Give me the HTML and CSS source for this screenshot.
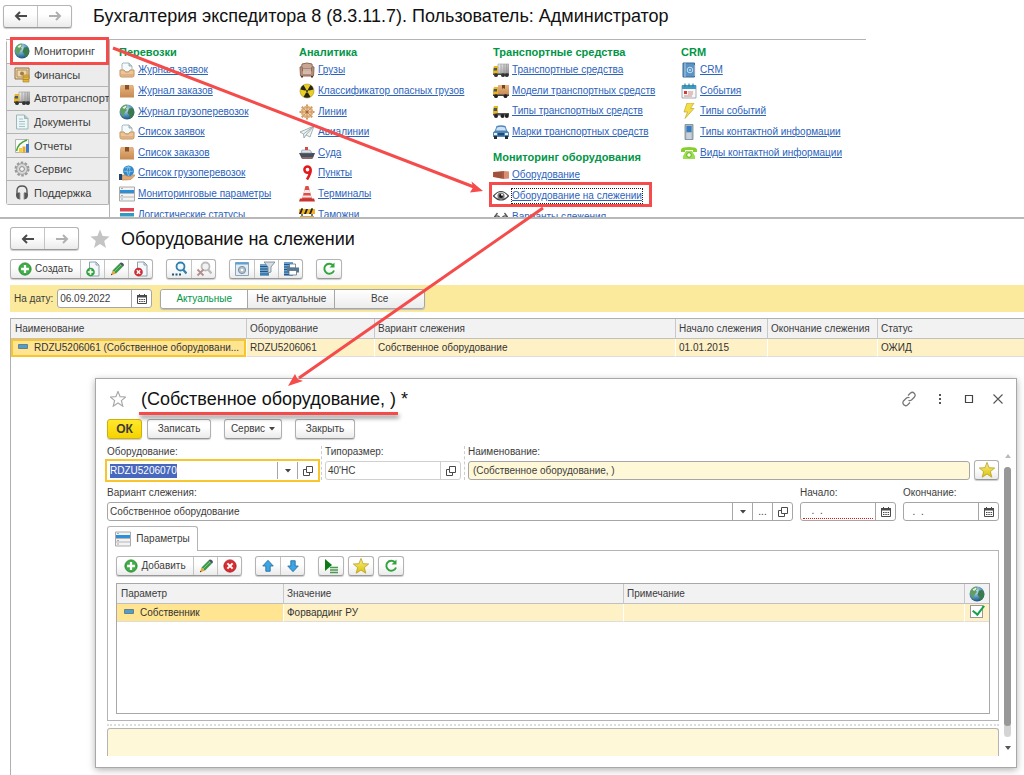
FILE: index.html
```html
<!DOCTYPE html>
<html lang="ru">
<head>
<meta charset="utf-8">
<title>Бухгалтерия экспедитора 8</title>
<link rel="stylesheet" href="styles.css">
</head>
<body>
<svg class="sprite" aria-hidden="true">
  <defs>
    <linearGradient id="g-box" x1="0" y1="0" x2="0" y2="1"><stop offset="0" stop-color="#e8b681"/><stop offset="1" stop-color="#c68a50"/></linearGradient>
    <radialGradient id="g-globe" cx=".4" cy=".3" r=".8"><stop offset="0" stop-color="#d8ecf7"/><stop offset=".5" stop-color="#5a98bd"/><stop offset="1" stop-color="#0e3c6b"/></radialGradient>
    <linearGradient id="g-star" x1="0" y1="0" x2="0" y2="1"><stop offset="0" stop-color="#f7ee8c"/><stop offset="1" stop-color="#ddc200"/></linearGradient>
    <linearGradient id="g-steel" x1="0" y1="0" x2="1" y2="1"><stop offset="0" stop-color="#f4f4f4"/><stop offset="1" stop-color="#8a8a8a"/></linearGradient>
  </defs>
  <symbol id="i-back" viewBox="0 0 16 16"><path d="M14 8H3M7 4L3 8l4 4" fill="none" stroke="currentColor" stroke-width="2"/></symbol>
  <symbol id="i-fwd" viewBox="0 0 16 16"><path d="M2 8h11M9 4l4 4-4 4" fill="none" stroke="currentColor" stroke-width="2"/></symbol>
  <symbol id="i-tray" viewBox="0 0 16 16"><path d="M3 2l1-1h6l3 3v6H3z" fill="#f5fafa" stroke="#8fa5ab" stroke-width=".8"/><path d="M10 1v3h3" fill="#bfd6dc" stroke="#8fa5ab" stroke-width=".8"/><path d="M1 8h4l1.500 2h3L11 8h4v5.500q0 1.500-1.500 1.500h-11Q1 15 1 13.500z" fill="#ecc598" stroke="#c4935f"/><path d="M1.500 13h13" stroke="#d3a06a"/></symbol>
  <symbol id="i-box" viewBox="0 0 16 16"><path d="M2 2h12l1 3v9.500H1V5z" fill="url(#g-box)"/><path d="M2 2h12l1 3H1z" fill="#e2b080"/><path d="M6 2h4v5l-1.300-1L8 7.300 7.200 6 6 7z" fill="#8a5029"/></symbol>
  <symbol id="i-globe" viewBox="0 0 16 16"><circle cx="8" cy="8" r="7.500" fill="url(#g-globe)"/><path d="M1.500 4.500Q4 .8 7.500 .6L8.500 3 7 4.500 8 6 6.500 7.500 5 10l-.5 3L2.500 10 .8 7.500z" fill="#5f9f63"/><path d="M10 4.500L13 4l1.800 2 .4 3-1.700 4-2 1.500L10.500 11 8.500 9z" fill="#3b7a4a"/><path d="M3.500 3.500L7 1.500 7.500 3 5 5z" fill="#e8f3e4"/></symbol>
  <symbol id="i-handglobe" viewBox="0 0 16 16"><circle cx="9.500" cy="6" r="5.500" fill="#3289c7"/><path d="M6 3q3-2 6 0M4.500 6q5 2 10 0M9.500 .5q-3 5 0 11M9.500 .5q3 5 0 11" fill="none" stroke="#8cc5ec" stroke-width=".8"/><path d="M3 10h3l3 1.500h3l3-2q1 0 .5 1.500L12 14.500 7 15H3z" fill="#e3a873" stroke="#a9703e" stroke-width=".5"/><path d="M0 9h3v6H0z" fill="#24466b"/></symbol>
  <symbol id="i-list" viewBox="0 0 16 16"><path d="M.5 1h15v14H.5z" fill="#f3f3f3" stroke="#aaa"/><path d="M1 4h14v3H1z" fill="#2e8fd6"/><path d="M1 7.500h14M1 11h14" stroke="#b5b5b5"/><path d="M2 2.500h2M2 9.500h2M2 13h2" stroke="#aaa"/></symbol>
  <symbol id="i-bars" viewBox="0 0 16 16"><path d="M1 1h14v3.500H1z" fill="#df4350"/><path d="M1 6h14v3.500H1z" fill="#319ac2"/><path d="M1 11h14v4H1z" fill="#6eb84c"/></symbol>
  <symbol id="i-sofa" viewBox="0 0 16 16"><path d="M3 2q5-2 10 0l.5 5h-11z" fill="#c9a592" stroke="#8d6b5a"/><path d="M1 5q2-1 2.500 1v3h9V6q.5-2 2.500-1l-.5 9h-13z" fill="#b58c78" stroke="#8d6b5a"/><path d="M4 9h8v3H4z" fill="#d7baa9"/><path d="M2 14h2v1.500H2zM12 14h2v1.500h-2z" fill="#543525"/></symbol>
  <symbol id="i-rad" viewBox="0 0 16 16"><circle cx="8" cy="8" r="7" fill="#e8cf22" stroke="#a0942c" stroke-width=".6"/><path d="M8 8L1.500 6.500Q2 3 4.500 2zM8 8l3.500-6Q14 3 14.500 6.500zM8 8l3.500 6Q8 15.500 4.500 14z" fill="#26261a"/><circle cx="8" cy="8" r="1.600" fill="#e8cf22"/><circle cx="8" cy="8" r="1" fill="#26261a"/></symbol>
  <symbol id="i-wheel" viewBox="0 0 16 16"><path d="M8 .5v15M.5 8h15M2.800 2.800l10.400 10.400M13.200 2.800L2.800 13.200" stroke="#cc9562" stroke-width="2"/><circle cx="8" cy="8" r="5" fill="#f0cfa8" stroke="#dfae76" stroke-width="2.400"/><path d="M8 3v10M3 8h10M4.500 4.500l7 7M11.500 4.500l-7 7" stroke="#c08450" stroke-width=".8"/><circle cx="8" cy="8" r="1.500" fill="#a4683a"/></symbol>
  <symbol id="i-plane" viewBox="0 0 16 16"><path d="M1 8l14-6-4 11-4-2-2 3-.5-4z" fill="#eef4f4" stroke="#8ca0a2" stroke-width=".8"/><path d="M15 2L4.500 10M15 2L7 11" stroke="#8ca0a2" stroke-width=".8"/></symbol>
  <symbol id="i-ship" viewBox="0 0 16 16"><path d="M0 8h16l-2 5H2.500z" fill="#46505d"/><path d="M2 12h12l-.5 2H3z" fill="#8d6a6a"/><path d="M3 5h8l2 3H2z" fill="#dde3e8" stroke="#7f8b98" stroke-width=".6"/><path d="M6 2h3v3H6z" fill="#d14c3e"/></symbol>
  <symbol id="i-pin" viewBox="0 0 16 16"><path d="M8.500 1.500a3 3 0 1 1 0 6.200a3 3 0 1 1 0-6.200M11.700 4.500Q12 8 8 14.500" fill="none" stroke="#e3191b" stroke-width="2.500"/></symbol>
  <symbol id="i-cone" viewBox="0 0 16 16"><path d="M6.500 0h3L13 13H3z" fill="#e34c42"/><path d="M5.500 4h5l.8 3H4.700zM4 9.500h8l.5 2h-9z" fill="#f4e9e7"/><path d="M1 12.500h14l1 3H0z" fill="#c8342f"/></symbol>
  <symbol id="i-barrier" viewBox="0 0 16 16"><path d="M2 1h2v14H2zM12 1h2v14h-2z" fill="#777"/><path d="M0 2h16v5H0z" fill="#f0b222"/><path d="M2 2h2L2 7H0zM7 2h2L7 7H5zM12 2h2l-2 5h-2z" fill="#27231b"/><path d="M1 9h14v3H1z" fill="#dba633"/></symbol>
  <symbol id="i-truck" viewBox="0 0 16 16"><path d="M5 2h11v10H5z" fill="url(#g-steel)" stroke="#999" stroke-width=".6"/><path d="M8 2v10M11 2v10M13.500 2v10" stroke="#999" stroke-width=".7"/><path d="M1 4h4v8.500H0V7z" fill="#e9b425"/><path d="M1 6h3v2.500H.5z" fill="#445866"/><path d="M0 11.500h16v1.500H0z" fill="#4e4e4e"/><circle cx="3" cy="13.200" r="1.900" fill="#333"/><circle cx="10" cy="13.200" r="1.900" fill="#333"/><circle cx="13.800" cy="13.200" r="1.900" fill="#333"/></symbol>
  <symbol id="i-truckbox" viewBox="0 0 16 16"><path d="M5 2h11v10H5z" fill="url(#g-box)"/><path d="M9 2h3v4L10.500 5 9 6z" fill="#7b431c"/><path d="M1 4h4v8.500H0V7z" fill="#e9b425"/><path d="M1 6h3v2.500H.5z" fill="#445866"/><path d="M0 11.500h16v1.500H0z" fill="#3e3e3e"/><circle cx="3" cy="13.200" r="1.900" fill="#222"/><circle cx="12.500" cy="13.200" r="1.900" fill="#222"/></symbol>
  <symbol id="i-chassis" viewBox="0 0 16 16"><path d="M1 3h4v9H0V6z" fill="#e9b425"/><path d="M1 5h3v3H.5z" fill="#445866"/><path d="M5 10h11v2.500H0V11z" fill="#555"/><circle cx="3" cy="13" r="2" fill="#222"/><circle cx="9.500" cy="13" r="2" fill="#222"/><circle cx="13.800" cy="13" r="2" fill="#222"/></symbol>
  <symbol id="i-car" viewBox="0 0 16 16"><path d="M3.500 2q4.500-1.500 9 0L14 6.500l2 2V13H0V8.500l2-2z" fill="#4c86bd"/><path d="M4 3.500q4-1.300 8 0l1 3H3z" fill="#cfe2ef"/><path d="M1 9h3v2H1zM12 9h3v2h-3z" fill="#f2f0da"/><path d="M5 9h6v2.500H5z" fill="#234b75"/><path d="M1 12h3v3H1zM12 12h3v3h-3z" fill="#252c35"/></symbol>
  <symbol id="i-cont" viewBox="0 0 16 16"><path d="M0 5l11-1v8L0 10z" fill="#ab5a42"/><path d="M11 4l5 .5v7l-5 .5z" fill="#d88f73"/><path d="M2 5v5M4 5v5.500M6 5v6M8 4.500v7" stroke="#8b4531" stroke-width=".7"/></symbol>
  <symbol id="i-eye" viewBox="0 0 16 16"><path d="M.5 8q7.500-9 15 0q-7.500 8-15 0z" fill="#fff" stroke="#444" stroke-width="1.200"/><circle cx="8" cy="8" r="3.600" fill="#777"/><circle cx="8" cy="8" r="1.900" fill="#111"/><circle cx="9" cy="6.800" r="1" fill="#fff"/></symbol>
  <symbol id="i-glasses" viewBox="0 0 16 16"><circle cx="4" cy="9.500" r="2.700" fill="#eee" stroke="#555" stroke-width="1.300"/><circle cx="12" cy="9.500" r="2.700" fill="#eee" stroke="#555" stroke-width="1.300"/><path d="M6.500 9h3M1.500 8l3-4M14.500 8l-3-4" fill="none" stroke="#555" stroke-width="1.300"/></symbol>
  <symbol id="i-book" viewBox="0 0 16 16"><path d="M2 1h11.500v14H2z" fill="#5a93c4" stroke="#3a6a95"/><path d="M4 1v14" stroke="#a8cae4"/><circle cx="9" cy="8" r="2.800" fill="none" stroke="#c5dff0"/><circle cx="9" cy="8" r="1" fill="#c5dff0"/><path d="M14 3v11" stroke="#e8e8e8"/></symbol>
  <symbol id="i-event" viewBox="0 0 16 16"><path d="M1 2.500h14V15H1z" fill="#f7f7f7" stroke="#8e9aa2" stroke-width=".8"/><path d="M1 2h14v4H1z" fill="#3c9cc6"/><path d="M4 .5v3M8 .5v3M12 .5v3" stroke="#236b8c"/><path d="M3 8h3v3H3z" fill="#d63b3b"/><path d="M7 9h5M7 11h5M3 13h8" stroke="#d08b8b"/></symbol>
  <symbol id="i-bolt" viewBox="0 0 16 16"><path d="M6 0h7L9.500 5.500H13L4 15.500 6.500 9H3z" fill="#f3dd4a" stroke="#c1a72c" stroke-width=".7"/></symbol>
  <symbol id="i-mobile" viewBox="0 0 16 16"><path d="M4 .5h8v15H4z" fill="#a9b6c2" stroke="#78858f" stroke-width=".8"/><path d="M5.500 2h5v6h-5z" fill="#347dc0"/><path d="M5.500 10h5M5.500 12h5M5.500 14h5" stroke="#e9edf0"/></symbol>
  <symbol id="i-phone" viewBox="0 0 16 16"><path d="M0 5q0-2 3-2.500q5-1 10 0Q16 3 16 5v2h-4V5H4v2H0z" fill="#86cf2f"/><path d="M5 6h6l3 5v3H2v-3z" fill="#9be04a"/><circle cx="8" cy="10" r="2.300" fill="#fff" stroke="#5fae1c"/></symbol>
  <symbol id="i-money" viewBox="0 0 16 16"><path d="M1 1h14v11H1z" fill="#ecd9ab" stroke="#94714a"/><path d="M3 3h10v7H3z" fill="none" stroke="#b28f62"/><circle cx="8" cy="6.500" r="2" fill="#a57b4e"/><path d="M9 8h6v7H9z" fill="#e2b63c" stroke="#a98024" stroke-width=".6"/><path d="M9 10h6M9 12.500h6" stroke="#a98024" stroke-width=".7"/></symbol>
  <symbol id="i-doc" viewBox="0 0 16 16"><path d="M2.500 1h8l3.500 3.500V15H2.500z" fill="#edf6f7" stroke="#9db6ba"/><path d="M10.500 1v3.500H14" fill="#aac8cd" stroke="#9db6ba"/><path d="M5 5h4M5 7.500h6M5 10h6M5 12.500h6" stroke="#a5c3c8"/></symbol>
  <symbol id="i-chart" viewBox="0 0 16 16"><path d="M1.500 1.500h13v13h-13z" fill="#fafafa" stroke="#b4b4b4"/><path d="M2.500 13Q4 5 13 2" fill="none" stroke="#49a337" stroke-width="1.500"/><path d="M5 10h3v4.500H5z" fill="#f2d03a"/><path d="M8.500 8.500h3v6h-3z" fill="#e9a92a"/><path d="M12 6h3v8.500h-3z" fill="#3f7bc8"/></symbol>
  <symbol id="i-gear" viewBox="0 0 16 16"><circle cx="8" cy="8" r="6.300" fill="none" stroke="#999" stroke-width="2.400" stroke-dasharray="2.500 1.450"/><circle cx="8" cy="8" r="5.400" fill="#d8d8d8" stroke="#a2a2a2"/><circle cx="8" cy="8" r="2.400" fill="#f4f4f4" stroke="#888"/></symbol>
  <symbol id="i-head" viewBox="0 0 16 16"><path d="M3 10V6q0-5 5-5t5 5v4" fill="none" stroke="#555" stroke-width="1.400"/><path d="M2 10q0-3 4-2.500v7Q2 14 2 10zM14 10q0-3-4-2.500v7q4-.5 4-4.500z" fill="#555"/><path d="M6.300 8v6.500M9.700 8v6.500" stroke="#c4c4c4" stroke-width="1.200"/></symbol>
  <symbol id="i-plus" viewBox="0 0 16 16"><circle cx="8" cy="8" r="7" fill="#3ead44" stroke="#24862c"/><path d="M8 3.500v9M3.500 8h9" stroke="#fff" stroke-width="2.600"/></symbol>
  <symbol id="i-newdoc" viewBox="0 0 16 16"><path d="M4.500 1H11l3 3v11H4.500z" fill="#f4f8fa" stroke="#8ea2ae"/><path d="M11 1v3h3" fill="none" stroke="#8ea2ae"/><circle cx="5.500" cy="11" r="4.300" fill="#2f9f3c"/><path d="M5.500 8.300v5.400M2.800 11h5.400" stroke="#fff" stroke-width="1.700"/></symbol>
  <symbol id="i-deldoc" viewBox="0 0 16 16"><path d="M4.500 1H11l3 3v11H4.500z" fill="#f4f8fa" stroke="#8ea2ae"/><path d="M11 1v3h3" fill="none" stroke="#8ea2ae"/><circle cx="5.500" cy="11" r="4.300" fill="#cf2c35"/><path d="M3.800 9.300l3.400 3.400M7.200 9.300l-3.400 3.400" stroke="#fff" stroke-width="1.500"/></symbol>
  <symbol id="i-pencil" viewBox="0 0 16 16"><path d="M3.500 9.500l7-7 3.300 3.300-7 7z" fill="#3d9b47"/><path d="M5 11l7-7" stroke="#7cc67d"/><path d="M10.500 2.500q1.500-2 3.500-.2t-.2 3.500z" fill="#4b5664"/><path d="M3.500 9.500L2 14.300l4.800-1.500z" fill="#e7a33c"/><path d="M2.400 12.800L2 14.300l1.500-.5z" fill="#222"/></symbol>
  <symbol id="i-search" viewBox="0 0 16 16"><circle cx="9.500" cy="5.500" r="4" fill="#eef7fb" stroke="#337fae" stroke-width="1.800"/><path d="M12 8.500l3.500 4" stroke="#337fae" stroke-width="2.300"/><path d="M1 13.500h2M4.500 13.500h2M8 13.500h2" stroke="#1d587e" stroke-width="2"/></symbol>
  <symbol id="i-searchx" viewBox="0 0 16 16"><circle cx="9.500" cy="5.500" r="4" fill="#f2f2f2" stroke="#bbb" stroke-width="1.800"/><path d="M12 8.500l3.500 4" stroke="#bbb" stroke-width="2.300"/><path d="M1.500 8.500l6 6M7.500 8.500l-6 6" stroke="#b58f8f" stroke-width="1.800"/></symbol>
  <symbol id="i-setup" viewBox="0 0 16 16"><path d="M1.500 1.500h13v13h-13z" fill="#e4edf3" stroke="#8aa6ba"/><path d="M1.500 2.500h13" stroke="#5ba3d6" stroke-width="2"/><circle cx="8" cy="9" r="3.600" fill="#b4c2cc" stroke="#7b8f9c"/><circle cx="8" cy="9" r="1.300" fill="#fff"/></symbol>
  <symbol id="i-filter" viewBox="0 0 16 16"><path d="M1 3h9v12H1z" fill="#6fa3cd"/><path d="M1 5.500h9M1 8h9M1 10.500h9M1 13h9" stroke="#1f5788"/><path d="M5 1h11l-4 5v5l-3 1V6z" fill="#d3dde4" stroke="#71818c" stroke-width=".8"/></symbol>
  <symbol id="i-print" viewBox="0 0 16 16"><path d="M1 1h9v14H1z" fill="#6fa3cd"/><path d="M1 3.500h9M1 6h9M1 8.500h9M1 11h9M1 13.500h9" stroke="#1f5788"/><path d="M6.500 3h6v4h-6z" fill="#fff" stroke="#4d6577" stroke-width=".7"/><path d="M4 6.500h12v5H4z" fill="#587791"/><path d="M6 9.500h7.500V14H6z" fill="#fff" stroke="#4d6577" stroke-width=".7"/></symbol>
  <symbol id="i-refresh" viewBox="0 0 16 16"><path d="M12 4.300A5 5 0 1 0 13 9.500" fill="none" stroke="#33a53f" stroke-width="2"/><path d="M13.500 1.500v5H8.500z" fill="#33a53f"/></symbol>
  <symbol id="i-cal" viewBox="0 0 12 12"><path d="M1.500 2.500h9v8h-9z" fill="#fff" stroke="#4a4a4a"/><path d="M1 2h10v2.500H1z" fill="#4a4a4a"/><path d="M3.500 1v2M8.500 1v2" stroke="#4a4a4a"/><path d="M3 6.500h1.500M5.300 6.500h1.500M7.600 6.500h1.500M3 8.500h1.500M5.300 8.500h1.500M7.600 8.500h1.500" stroke="#4a4a4a"/></symbol>
  <symbol id="i-minus" viewBox="0 0 10 5"><path d="M.5 .5h9v4h-9z" fill="#4fa0c9" stroke="#67808a"/></symbol>
  <symbol id="i-star" viewBox="0 0 20 20"><path d="M10 .5l2.600 6.600 7 .4-5.400 4.500 1.800 7-6-3.900-6 3.900 1.800-7L.4 7.500l7-.4z"/></symbol>
  <symbol id="i-open" viewBox="0 0 10 10"><path d="M3.500 .5h6v6h-6z" fill="#fff" stroke="#4a4a4a"/><path d="M3 3.500H.5v6h6V7" fill="none" stroke="#4a4a4a"/></symbol>
  <symbol id="i-drop" viewBox="0 0 6 4"><path d="M0 0h6L3 3.500z" fill="#444"/></symbol>
  <symbol id="i-link" viewBox="0 0 16 16"><path d="M7 4.500l2.500-2.500q2-1.500 3.700.2T13.500 6L10.500 9q-1.500 1.200-3 .2M9 11.500L6.500 14q-2 1.500-3.700-.2T2.500 10L5.500 7q1.500-1.200 3-.2" fill="none" stroke="#777" stroke-width="1.300"/></symbol>
  <symbol id="i-dots" viewBox="0 0 12 12"><path d="M5 1h2v2H5zM5 5h2v2H5zM5 9h2v2H5z" fill="#555"/></symbol>
  <symbol id="i-max" viewBox="0 0 12 12"><path d="M2.500 2.500h7v7h-7z" fill="none" stroke="#444" stroke-width="1.200"/></symbol>
  <symbol id="i-close" viewBox="0 0 12 12"><path d="M1.500 1.500l9 9M10.500 1.500l-9 9" stroke="#555" stroke-width="1.100"/></symbol>
  <symbol id="i-del" viewBox="0 0 16 16"><circle cx="8" cy="8" r="7" fill="#dc2b30" stroke="#a81d24"/><path d="M5 5l6 6M11 5l-6 6" stroke="#fff" stroke-width="2.400"/></symbol>
  <symbol id="i-up" viewBox="0 0 16 16"><path d="M8 1.500L14 8h-3.500v6h-5V8H2z" fill="#3ca5e6" stroke="#27709f"/></symbol>
  <symbol id="i-down" viewBox="0 0 16 16"><path d="M8 14.500L14 8h-3.500V2h-5v6H2z" fill="#3ca5e6" stroke="#27709f"/></symbol>
  <symbol id="i-play" viewBox="0 0 16 16"><path d="M2 1l7 6-7 6z" fill="#0c7a12"/><path d="M7 9.500h8M7 12h8M7 14.500h8" stroke="#4a9b4e" stroke-width="1.300"/></symbol>
</svg>

<header class="desk">
  <div class="desk__top">
    <div class="history">
      <button type="button" aria-label="Назад"><svg class="ico"><use href="#i-back"/></svg></button>
      <button type="button" class="is-off" aria-label="Вперед"><svg class="ico"><use href="#i-fwd"/></svg></button>
    </div>
    <h1>Бухгалтерия экспедитора 8 (8.3.11.7). Пользователь: Администратор</h1>
  </div>
  <div class="desk__body">
    <nav class="sections">
      <button type="button" class="is-current"><svg class="ico"><use href="#i-globe"/></svg>Мониторинг</button>
      <button type="button"><svg class="ico"><use href="#i-money"/></svg>Финансы</button>
      <button type="button"><svg class="ico"><use href="#i-truck"/></svg>Автотранспорт</button>
      <button type="button"><svg class="ico"><use href="#i-doc"/></svg>Документы</button>
      <button type="button"><svg class="ico"><use href="#i-chart"/></svg>Отчеты</button>
      <button type="button"><svg class="ico"><use href="#i-gear"/></svg>Сервис</button>
      <button type="button"><svg class="ico"><use href="#i-head"/></svg>Поддержка</button>
    </nav>
    <div class="menu">
      <section>
        <h2>Перевозки</h2>
        <ul class="links links--8">
          <li><svg class="ico"><use href="#i-tray"/></svg><a href="#">Журнал заявок</a></li>
          <li><svg class="ico"><use href="#i-box"/></svg><a href="#">Журнал заказов</a></li>
          <li><svg class="ico"><use href="#i-globe"/></svg><a href="#">Журнал грузоперевозок</a></li>
          <li><svg class="ico"><use href="#i-tray"/></svg><a href="#">Список заявок</a></li>
          <li><svg class="ico"><use href="#i-box"/></svg><a href="#">Список заказов</a></li>
          <li><svg class="ico"><use href="#i-handglobe"/></svg><a href="#">Список грузоперевозок</a></li>
          <li><svg class="ico"><use href="#i-list"/></svg><a href="#">Мониторинговые параметры</a></li>
          <li><svg class="ico"><use href="#i-bars"/></svg><a href="#">Логистические статусы</a></li>
        </ul>
      </section>
      <section>
        <h2>Аналитика</h2>
        <ul class="links links--8">
          <li><svg class="ico"><use href="#i-sofa"/></svg><a href="#">Грузы</a></li>
          <li><svg class="ico"><use href="#i-rad"/></svg><a href="#">Классификатор опасных грузов</a></li>
          <li><svg class="ico"><use href="#i-wheel"/></svg><a href="#">Линии</a></li>
          <li><svg class="ico"><use href="#i-plane"/></svg><a href="#">Авиалинии</a></li>
          <li><svg class="ico"><use href="#i-ship"/></svg><a href="#">Суда</a></li>
          <li><svg class="ico"><use href="#i-pin"/></svg><a href="#">Пункты</a></li>
          <li><svg class="ico"><use href="#i-cone"/></svg><a href="#">Терминалы</a></li>
          <li><svg class="ico"><use href="#i-barrier"/></svg><a href="#">Таможни</a></li>
        </ul>
      </section>
      <section>
        <h2>Транспортные средства</h2>
        <ul class="links links--4">
          <li><svg class="ico"><use href="#i-truck"/></svg><a href="#">Транспортные средства</a></li>
          <li><svg class="ico"><use href="#i-truckbox"/></svg><a href="#">Модели транспортных средств</a></li>
          <li><svg class="ico"><use href="#i-chassis"/></svg><a href="#">Типы транспортных средств</a></li>
          <li><svg class="ico"><use href="#i-car"/></svg><a href="#">Марки транспортных средств</a></li>
        </ul>
        <h2 class="menu__next">Мониторинг оборудования</h2>
        <ul class="links links--3">
          <li><svg class="ico"><use href="#i-cont"/></svg><a href="#">Оборудование</a></li>
          <li><svg class="ico"><use href="#i-eye"/></svg><a href="#" class="is-focused">Оборудование на слежении</a></li>
          <li><svg class="ico"><use href="#i-glasses"/></svg><a href="#">Варианты слежения</a></li>
        </ul>
      </section>
      <section>
        <h2>CRM</h2>
        <ul class="links links--5">
          <li><svg class="ico"><use href="#i-book"/></svg><a href="#">CRM</a></li>
          <li><svg class="ico"><use href="#i-event"/></svg><a href="#">События</a></li>
          <li><svg class="ico"><use href="#i-bolt"/></svg><a href="#">Типы событий</a></li>
          <li><svg class="ico"><use href="#i-mobile"/></svg><a href="#">Типы контактной информации</a></li>
          <li><svg class="ico"><use href="#i-phone"/></svg><a href="#">Виды контактной информации</a></li>
        </ul>
      </section>
    </div>
  </div>
</header>

<main class="page">
  <div class="page__head">
    <div class="history">
      <button type="button" aria-label="Назад"><svg class="ico"><use href="#i-back"/></svg></button>
      <button type="button" class="is-off" aria-label="Вперед"><svg class="ico"><use href="#i-fwd"/></svg></button>
    </div>
    <svg class="fav"><use href="#i-star"/></svg>
    <h2>Оборудование на слежении</h2>
  </div>
  <div class="tools">
    <div class="group">
      <button type="button" class="wide"><svg class="ico14"><use href="#i-plus"/></svg>Создать</button>
      <button type="button" aria-label="Скопировать"><svg class="ico"><use href="#i-newdoc"/></svg></button>
      <button type="button" aria-label="Изменить"><svg class="ico"><use href="#i-pencil"/></svg></button>
      <button type="button" aria-label="Удалить"><svg class="ico"><use href="#i-deldoc"/></svg></button>
    </div>
    <div class="group">
      <button type="button" aria-label="Найти"><svg class="ico"><use href="#i-search"/></svg></button>
      <button type="button" aria-label="Отменить поиск"><svg class="ico"><use href="#i-searchx"/></svg></button>
    </div>
    <div class="group">
      <button type="button" aria-label="Настройка"><svg class="ico"><use href="#i-setup"/></svg></button>
      <button type="button" aria-label="Отбор"><svg class="ico"><use href="#i-filter"/></svg></button>
      <button type="button" aria-label="Печать"><svg class="ico"><use href="#i-print"/></svg></button>
    </div>
    <div class="group">
      <button type="button" aria-label="Обновить"><svg class="ico"><use href="#i-refresh"/></svg></button>
    </div>
  </div>
  <div class="filter">
    <label for="date">На дату:</label>
    <div class="field field--date"><input id="date" value="06.09.2022"><button type="button" aria-label="Календарь"><svg class="ico12"><use href="#i-cal"/></svg></button></div>
    <div class="switch">
      <button type="button" class="is-on">Актуальные</button>
      <button type="button">Не актуальные</button>
      <button type="button">Все</button>
    </div>
  </div>
  <div class="listing">
    <table class="grid">
      <colgroup><col class="c-name"><col class="c-eq"><col class="c-var"><col class="c-start"><col class="c-end"><col></colgroup>
      <thead><tr><th>Наименование</th><th>Оборудование</th><th>Вариант слежения</th><th>Начало слежения</th><th>Окончание слежения</th><th>Статус</th></tr></thead>
      <tbody><tr><td class="is-cell"><svg class="minus"><use href="#i-minus"/></svg>RDZU5206061 (Собственное оборудовани...</td><td>RDZU5206061</td><td>Собственное оборудование</td><td>01.01.2015</td><td></td><td>ОЖИД</td></tr></tbody>
    </table>
  </div>
</main>

<div class="window" role="dialog" aria-labelledby="wtitle">
  <div class="window__head">
    <svg class="window__star"><use href="#i-star"/></svg>
    <h2 id="wtitle">(Собственное оборудование, ) *</h2>
    <div class="window__ctl">
      <button type="button" aria-label="Ссылка"><svg class="ico"><use href="#i-link"/></svg></button>
      <button type="button" aria-label="Еще"><svg class="ico12"><use href="#i-dots"/></svg></button>
      <button type="button" aria-label="Развернуть"><svg class="ico12"><use href="#i-max"/></svg></button>
      <button type="button" aria-label="Закрыть окно"><svg class="ico12"><use href="#i-close"/></svg></button>
    </div>
  </div>
  <div class="window__body">
    <div class="form">
      <div class="cmds">
        <button type="button" class="btn btn--ok">ОК</button>
        <button type="button" class="btn btn--save">Записать</button>
        <button type="button" class="btn btn--service">Сервис <svg class="drop"><use href="#i-drop"/></svg></button>
        <button type="button" class="btn btn--close">Закрыть</button>
      </div>
      <div class="row">
        <div class="cell cell--eq"><label for="eq">Оборудование:</label>
          <div class="field field--focus"><input id="eq" value="RDZU5206070"><button type="button" aria-label="Выбрать"><svg class="drop"><use href="#i-drop"/></svg></button><button type="button" aria-label="Открыть"><svg class="ico10"><use href="#i-open"/></svg></button></div></div>
        <div class="cell cell--size"><label for="size">Типоразмер:</label>
          <div class="field field--pale"><input id="size" value="40'HC"><button type="button" aria-label="Открыть"><svg class="ico10"><use href="#i-open"/></svg></button></div></div>
        <div class="cell cell--grow"><label for="nm">Наименование:</label>
          <div class="field field--yellow"><input id="nm" value="(Собственное оборудование, )"></div></div>
        <button type="button" class="btn btn--star" aria-label="Заполнить"><svg class="ico gold"><use href="#i-star"/></svg></button>
      </div>
      <div class="row">
        <div class="cell cell--grow"><label for="vr">Вариант слежения:</label>
          <div class="field"><input id="vr" value="Собственное оборудование"><button type="button" aria-label="Список"><svg class="drop"><use href="#i-drop"/></svg></button><button type="button">...</button><button type="button" aria-label="Открыть"><svg class="ico10"><use href="#i-open"/></svg></button></div></div>
        <div class="cell cell--date"><label for="st">Начало:</label>
          <div class="field field--err"><input id="st" value="  .  ."><button type="button" aria-label="Календарь"><svg class="ico12"><use href="#i-cal"/></svg></button></div></div>
        <div class="cell cell--date"><label for="en">Окончание:</label>
          <div class="field"><input id="en" value="  .  ."><button type="button" aria-label="Календарь"><svg class="ico12"><use href="#i-cal"/></svg></button></div></div>
      </div>
      <button type="button" class="tab"><svg class="ico"><use href="#i-list"/></svg>Параметры</button>
      <div class="panel">
        <div class="tools tools--panel">
          <div class="group">
            <button type="button" class="wide wide--add"><svg class="ico14"><use href="#i-plus"/></svg>Добавить</button>
            <button type="button" aria-label="Изменить"><svg class="ico"><use href="#i-pencil"/></svg></button>
            <button type="button" aria-label="Удалить"><svg class="ico14"><use href="#i-del"/></svg></button>
          </div>
          <div class="group">
            <button type="button" aria-label="Вверх"><svg class="ico14"><use href="#i-up"/></svg></button>
            <button type="button" aria-label="Вниз"><svg class="ico14"><use href="#i-down"/></svg></button>
          </div>
          <div class="tools__singles">
            <div class="group"><button type="button" aria-label="Выполнить"><svg class="ico"><use href="#i-play"/></svg></button></div>
            <div class="group"><button type="button" aria-label="Избранное"><svg class="ico gold"><use href="#i-star"/></svg></button></div>
            <div class="group"><button type="button" aria-label="Обновить"><svg class="ico"><use href="#i-refresh"/></svg></button></div>
          </div>
        </div>
        <div class="params">
          <table class="grid">
            <colgroup><col class="p-name"><col class="p-val"><col><col class="p-flag"></colgroup>
            <thead><tr><th>Параметр</th><th>Значение</th><th>Примечание</th><th><svg class="ico"><use href="#i-globe"/></svg></th></tr></thead>
            <tbody><tr><td class="is-picked"><svg class="minus"><use href="#i-minus"/></svg>Собственник</td><td>Форвардинг РУ</td><td></td><td><input type="checkbox" class="check" checked aria-label="Мониторинг"></td></tr></tbody>
          </table>
        </div>
      </div>
      <div class="splitter"></div>
      <div class="note"></div>
    </div>
    <div class="scroll"><i class="scroll__up"></i><span class="scroll__track"><span class="scroll__thumb"></span></span><i class="scroll__down"></i></div>
  </div>
</div>

<svg class="marks" viewBox="0 0 1024 775" aria-hidden="true">
  <g fill="none" stroke="#f54b4b" stroke-width="3">
    <path d="M11.500 38.500h96v25h-96zM490.500 183.500h160v22h-160z"/>
    <path d="M113 48l361 139M543 208L299 378"/>
    <path d="M139 413.500h259" class="marks__line"/>
  </g>
  <path d="M483 191l-13 1.500 3-5-1.500-6zM288 386l7-12 2.500 5 5.500 2z" fill="#f54b4b"/>
</svg>
<script src="focus.js"></script>
</body>
</html>
```
FILE: styles.css
```css
* { box-sizing: border-box; }
body {
  margin: 0;
  min-height: 100vh;
  display: flex;
  flex-direction: column;
  position: relative;
  overflow: hidden;
  background: #fff;
  color: #3c3c3c;
  font: 10px/14px "Liberation Sans", Arial, sans-serif;
}
h1, h2, ul { margin: 0; padding: 0; font-weight: normal; list-style: none; }
button, input { font: inherit; color: inherit; margin: 0; }
button { padding: 0; border: 0; background: none; display: flex; align-items: center; justify-content: center; }
svg { flex: none; display: block; }
.sprite { position: absolute; width: 0; height: 0; }
.ico { width: 16px; height: 16px; }
.ico14 { width: 14px; height: 14px; }
.ico12 { width: 12px; height: 12px; }
.ico10 { width: 10px; height: 10px; }
.drop { width: 6px; height: 4px; }
.gold { fill: url(#g-star); stroke: #b9a024; }

.history, .group {
  display: flex;
  border: 1px solid #b4b4b4;
  border-bottom-color: #999;
  border-radius: 3px;
  background: linear-gradient(#fff 40%, #ebebeb);
  box-shadow: 0 1px 1px #ccc;
}
.history { width: 69px; height: 23px; color: #4a4a4a; }
.history button { flex: 1; }
.history button + button, .group button + button { border-left: 1px solid #c4c4c4; }
.history .is-off { color: #b0b0b0; }

/* main menu, clipped by the page below */
.desk { flex: none; height: 219px; overflow: hidden; border-bottom: 2px solid #b8b8b8; }
.desk__top { display: flex; align-items: center; gap: 21px; padding: 4px 3px 0; height: 28px; }
.desk h1, .page__head h2, .window__head h2 { color: #111; font-size: 18px; line-height: 22px; }
.desk__body { display: flex; align-items: flex-start; width: 84%; margin: 11px 0 0 6px; border-top: 1px solid #b4b4b4; }
.sections { flex: none; width: 104px; height: 165px; display: flex; flex-direction: column; border: 1px solid #b4b4b4; border-top: 0; border-radius: 3px; font-size: 11px; }
.sections button { flex: 1; justify-content: flex-start; gap: 4px; padding-left: 7px; background: #ececec; border-right: 1px solid #b4b4b4; white-space: nowrap; }
.sections button + button { border-top: 1px solid #b4b4b4; }
.sections .is-current { background: #fff; border-right-color: #fff; }
.menu { flex: 1; min-height: 180px; margin-left: -1px; padding: 4px 0 0 9px; display: grid; grid-template-columns: 180px 194px 188px 1fr; border-left: 1px solid #b4b4b4; }
.menu h2 { color: #009646; font-size: 11px; font-weight: bold; line-height: 16px; white-space: nowrap; }
.menu__next { margin-top: 7px; }
.links { display: flex; flex-direction: column; }
.links--8 { height: 165px; }
.links--5 { height: 103px; }
.links--4 { height: 82px; }
.links--3 { height: 62px; }
.links li { flex: 1; display: flex; align-items: center; gap: 3px; white-space: nowrap; }
a { color: #2c63bd; text-decoration: underline; }
.is-focused { outline: 1px dotted #222; }

/* list page */
.page { flex: 1; display: flex; flex-direction: column; padding: 8px 0 0 10px; }
.page__head { display: flex; align-items: center; gap: 11px; }
.fav { width: 20px; height: 20px; fill: #c4c4c4; }
.tools { display: flex; gap: 13px; padding-top: 9px; }
.group { height: 20px; }
.group button { width: 24px; }
.group .wide { width: 69px; gap: 3px; }
.group .wide--add { width: 76px; }
.filter { display: flex; align-items: center; height: 27px; margin-top: 6px; padding-left: 4px; background: #fbea9c; }
.field { display: flex; height: 19px; border: 1px solid #a6a6a6; border-radius: 3px; background: #fff; }
.field input { flex: 1; min-width: 0; width: 0; border: 0; padding: 0 2px; background: none; outline: 0; }
.field button { flex: none; width: 20px; border-left: 1px solid #a6a6a6; }
.field--date { width: 95px; margin: 0 8px 0 4px; }
.switch { display: grid; grid-template-columns: 86px 87px 90px; height: 20px; border: 1px solid #a6a6a6; border-radius: 3px; background: linear-gradient(#fff, #ececec); box-shadow: 0 1px 1px #bbb; }
.switch button + button { border-left: 1px solid #a6a6a6; }
.switch .is-on { color: #009646; background: #fff; border-radius: 3px 0 0 3px; }
.listing { flex: 1; margin-top: 6px; border: 1px solid #b0b0b0; border-width: 1px 0 0 1px; }
.grid { width: 100%; table-layout: fixed; border-collapse: separate; border-spacing: 0; white-space: nowrap; }
.grid th { height: 20px; padding: 0 4px; text-align: left; font-weight: normal; background: #f2f2f2; border-bottom: 1px solid #c0c0c0; }
.grid th + th { border-left: 1px solid #c8c8c8; padding: 0 0 0 3px; }
.grid td { height: 18px; padding: 0 4px; background: #fff1c6; border-bottom: 1px solid #ddd; color: #333; overflow: hidden; }
.grid td + td { border-left: 1px solid #fff; padding-left: 3px; }
.grid .is-cell { padding: 0 2px; background: #ffe491; border: 2px solid #f8c62c; }
.grid .is-picked { background: #ffe491; }
.minus { display: inline-block; width: 10px; height: 5px; margin: 0 6px 3px 3px; vertical-align: middle; }
.c-name { width: 235px; }
.c-eq { width: 128px; }
.c-var { width: 301px; }
.c-start { width: 92px; }
.c-end { width: 110px; }

/* item window over the list */
.window { position: absolute; top: 378px; left: 95px; right: 7px; background: #fff; border: 1px solid #a8a8a8; box-shadow: 0 2px 7px rgba(0, 0, 0, .3); padding-bottom: 11px; }
.window__head { display: flex; align-items: center; height: 40px; padding: 0 12px 0 14px; }
.window__star { width: 16px; height: 16px; fill: #fff; stroke: #aaa; stroke-width: 1.5px; }
.window__head h2 { flex: 1; margin-left: 15px; }
.window__ctl { display: flex; gap: 17px; align-items: center; }
.window__body { display: flex; }
.form { flex: 1; min-width: 0; padding-left: 11px; }
.cmds { display: flex; gap: 5px; }
.btn { height: 20px; border: 1px solid #b0b0b0; border-bottom-color: #969696; border-radius: 3px; background: linear-gradient(#fff 40%, #ebebeb); box-shadow: 0 1px 1px #ccc; gap: 4px; }
.btn--ok { width: 35px; background: linear-gradient(#ffe92a, #f5d300); border-color: #cdaf10; font-weight: bold; font-size: 12px; }
.btn--save { width: 64px; margin-right: 8px; }
.btn--service { width: 58px; margin-right: 8px; }
.btn--close { width: 60px; }
.btn--star { width: 25px; margin-left: -3px; }
.row { display: flex; align-items: flex-end; gap: 7px; padding-top: 6px; }
.row label { display: block; height: 16px; line-height: 14px; }
.cell--eq { width: 211px; }
.cell--size { width: 136px; }
.cell--eq, .cell--size { position: relative; }
.cell--eq::after, .cell--size::after { content: ""; position: absolute; right: -4px; top: 1px; bottom: 0; border-right: 1px dashed #ccc; }
.cell--grow { flex: 1; }
.cell--date { width: 96px; }
.field--focus { outline: 2px solid #f8c62c; border-color: transparent; border-radius: 0; }
.field--pale, .field--pale button { border-color: #d0d0d0; }
.field--yellow { background: #fff8d8; }
.field--yellow input { padding-left: 4px; }
.field--err input { border-bottom: 1px dotted #e11; margin: 0 2px 1px; padding: 0; }
.field input::selection { background: #4868bd; color: #fff; }
#st, #en { white-space: pre; padding-left: 3px; }
.tab { position: relative; z-index: 1; width: 91px; height: 25px; margin-top: 5px; gap: 5px; background: #fff; border: 1px solid #b4b4b4; border-bottom: 0; border-radius: 3px 3px 0 0; }
.panel { margin-top: -1px; padding: 0 8px 6px; border: 1px solid #b4b4b4; }
.tools--panel { padding-top: 5px; }
.tools__singles { display: flex; gap: 4px; }
.params { min-height: 131px; margin-top: 7px; border: 1px solid #a8a8a8; }
.params .ico { margin: 0 0 0 1px; }
.p-name { width: 166px; }
.p-val { width: 340px; }
.p-flag { width: 25px; }
.check { display: block; appearance: none; width: 13px; height: 13px; margin: 0 0 2px 2px; border: 1px solid #999; background: #fff; position: relative; }
.check:checked::after { content: ""; position: absolute; left: 4px; top: -3px; width: 5px; height: 10px; border: solid #17a04a; border-width: 0 2px 2px 0; transform: rotate(38deg); }
.splitter { margin: 3px 0 2px; border-top: 2px dotted #ddd; }
.note { height: 28px; background: #fff8d8; border: 1px solid #b4b4b4; border-bottom: 0; border-radius: 3px 3px 0 0; }
.scroll { flex: none; width: 17px; margin: 35px 0 6px; display: flex; flex-direction: column; align-items: center; gap: 9px; }
.scroll__track { flex: 1; width: 7px; border-radius: 4px; background: #d4d4d4; }
.scroll__thumb { display: block; width: 7px; height: 96%; border-radius: 4px; background: #989898; }
.scroll__up, .scroll__down { border: 3px solid transparent; }
.scroll__up { border-top: 0; border-bottom: 4px solid #bbb; }
.scroll__down { border-bottom: 0; border-top: 4px solid #555; }

/* callout frames and arrows */
.marks { position: absolute; top: 0; left: 0; width: 1024px; height: 775px; pointer-events: none; }
.marks__line { filter: drop-shadow(1px 3px 2px rgba(0, 0, 0, .5)); }
```
FILE: focus.js
```js
const field = document.getElementById("eq");
field.focus({ preventScroll: true });
field.select();
```
